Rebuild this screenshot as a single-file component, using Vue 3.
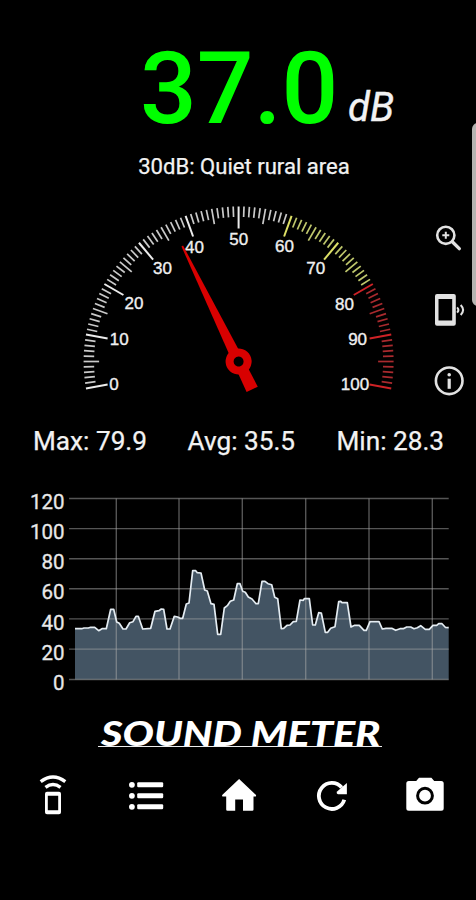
<script setup>
const CX = 238.6
const CY = 361.5
const R = 155

const ticks = Array.from({ length: 101 }, (_, v) => {
  const a = ((v * 2 - 10) * Math.PI) / 180
  const len = v % 10 === 0 ? 22 : v % 5 === 0 ? 15.5 : 10.5
  return {
    v,
    x1: CX - R * Math.cos(a),
    y1: CY - R * Math.sin(a),
    x2: CX - (R - len) * Math.cos(a),
    y2: CY - (R - len) * Math.sin(a),
    kind: v >= 80 ? 'loud' : v >= 60 ? 'medium' : 'calm',
    major: v % 10 === 0
  }
})

const dialLabels = [
  { t: 0, x: 114, y: 389.8 },
  { t: 10, x: 119.2, y: 345.4 },
  { t: 20, x: 134, y: 308.8 },
  { t: 30, x: 162.4, y: 274.2 },
  { t: 40, x: 194.4, y: 252.6 },
  { t: 50, x: 238.8, y: 244.8 },
  { t: 60, x: 284.4, y: 252.2 },
  { t: 70, x: 315.8, y: 274 },
  { t: 80, x: 344.4, y: 309.8 },
  { t: 90, x: 357.6, y: 345.4 },
  { t: 100, x: 355, y: 389.8 }
]

const level = 37
const needleTurn = `translate(${CX} ${CY}) rotate(${(level - 50) * 2})`

const rows = [
  { t: 120, y: 498.5 },
  { t: 100, y: 528.6 },
  { t: 80, y: 558.7 },
  { t: 60, y: 588.8 },
  { t: 40, y: 618.9 },
  { t: 20, y: 649.1 },
  { t: 0, y: 679.5 }
]
const cols = [116.3, 179, 242.3, 305.7, 369, 432.3]

// Samples in thirds of a pixel, measured from the chart's upper left corner.
const samples = [
  [165, 431], [185, 431], [192, 429], [205, 429], [212, 427], [224, 427], [236, 437], [246, 431],
  [259, 431], [272, 373], [281, 373], [290, 411], [298, 415], [309, 432], [318, 432], [329, 413],
  [339, 410], [348, 394], [355, 394], [368, 432], [392, 430], [405, 379], [417, 377], [424, 372],
  [431, 373], [441, 432], [450, 432], [463, 394], [473, 396], [480, 400], [488, 400], [499, 357],
  [507, 354], [518, 257], [527, 257], [532, 263], [543, 264], [554, 315], [562, 318], [573, 356],
  [582, 358], [593, 448], [602, 448], [613, 369], [622, 362], [631, 349], [641, 345], [652, 296],
  [660, 296], [668, 319], [676, 322], [685, 336], [696, 342], [708, 356], [715, 356], [726, 289],
  [735, 289], [744, 296], [755, 299], [764, 337], [773, 341], [784, 431], [791, 430], [801, 421],
  [810, 420], [820, 410], [829, 409], [840, 345], [850, 346], [853, 341], [868, 341], [878, 420],
  [886, 420], [896, 383], [904, 384], [916, 442], [923, 442], [932, 430], [945, 425], [956, 350],
  [962, 349], [966, 353], [982, 353], [993, 426], [1004, 421], [1018, 421], [1032, 436], [1039, 436],
  [1050, 410], [1077, 410], [1087, 432], [1098, 430], [1115, 430], [1127, 436], [1140, 431],
  [1150, 431], [1160, 426], [1172, 426], [1182, 431], [1192, 428], [1202, 422], [1216, 433],
  [1228, 433], [1239, 421], [1250, 421], [1256, 416], [1266, 416], [1276, 427], [1286, 428]
]
const line = samples
  .map(([x, y]) => `${(20 + x / 3).toFixed(1)},${(485 + y / 3).toFixed(1)}`)
  .join(' ')
const area = `75,679.5 ${line} 448.7,679.5`
</script>

<template>
  <main class="screen">
    <header class="reading">
      <span class="value">37.0</span>
      <span class="unit">dB</span>
    </header>
    <p class="hint">30dB: Quiet rural area</p>

    <section class="meter">
      <svg class="dial" viewBox="0 195 416 210">
        <line
          v-for="k in ticks"
          :key="k.v"
          :x1="k.x1"
          :y1="k.y1"
          :x2="k.x2"
          :y2="k.y2"
          :class="['tick', k.kind, { major: k.major }]"
        />
        <text v-for="l in dialLabels" :key="l.t" :x="l.x" :y="l.y" class="dial-label">{{ l.t }}</text>
        <g :transform="needleTurn" class="needle">
          <path d="M-.9 -128.5H.9L5.2 -11H-5.2Z" />
          <path d="M-5.6 10H5.6L6.2 31H-6.2Z" />
          <circle r="9" class="hub" />
        </g>
      </svg>
      <nav class="side">
        <svg class="side-icon" viewBox="430.5 220 36 36">
          <circle cx="445.3" cy="235.3" r="8.6" class="stroke" />
          <path d="M451.8 241.8L458.8 248.6" class="stroke handle" />
          <path d="M445.3 231.8V238.8M441.8 235.3H448.8" class="stroke thin" />
        </svg>
        <svg class="side-icon" viewBox="430.5 292 36 36">
          <path
            d="M436.5 294H453.3Q455.3 294 455.3 296V323.7Q455.3 325.7 453.3 325.7H436.5Q434.5 325.7 434.5 323.7V296Q434.5 294 436.5 294ZM438 299V320.5H451.7V299Z"
            fill-rule="evenodd"
            class="solid"
          />
          <path d="M456.6 307.4Q459.2 310 456.6 312.6" class="stroke thin" />
          <path d="M460.2 305Q465 310 460.2 315" class="stroke thin" />
        </svg>
        <svg class="side-icon" viewBox="430.5 363 36 36">
          <circle cx="448.7" cy="380.8" r="13.3" class="stroke" />
          <circle cx="448.7" cy="374.7" r="1.8" class="solid" />
          <path d="M448.7 378.7V388.8" class="stroke stem" />
        </svg>
      </nav>
    </section>

    <section class="stats">
      <span>Max: 79.9</span>
      <span>Avg: 35.5</span>
      <span>Min: 28.3</span>
    </section>

    <svg class="chart" viewBox="0 485 476 215">
      <polygon :points="area" class="area" />
      <path v-for="r in rows" :key="r.t" :d="`M69 ${r.y}H448.7`" class="grid" />
      <path v-for="c in cols" :key="c" :d="`M${c} 498.5V679.5`" class="grid" />
      <polyline :points="line" class="trace" />
      <text v-for="r in rows" :key="'t' + r.t" x="64.6" :y="r.y + 10.6" class="axis">{{ r.t }}</text>
    </svg>

    <div class="brand"><h1><span>SOUND METER</span></h1></div>

    <nav class="tabs">
      <svg class="tab" viewBox="32.7 774 40 42">
        <path
          d="M46.7 791.7H58.7Q60.7 791.7 60.7 793.7V812.3Q60.7 814.3 58.7 814.3H46.7Q44.7 814.3 44.7 812.3V793.7Q44.7 791.7 46.7 791.7ZM47.5 795.7V810.3H57.9V795.7Z"
          fill-rule="evenodd"
        />
        <path d="M40.4 781.6Q52.7 772.4 65 781.6" class="wave" />
        <path d="M45.2 787.4Q52.7 781.6 60.2 787.4" class="wave" />
      </svg>
      <svg class="tab" viewBox="125.4 774 40 42">
        <g v-for="y in [784.8, 795.8, 806.8]" :key="y">
          <circle cx="131.3" :cy="y" r="2.9" />
          <rect x="136.6" :y="y - 2.5" width="26" height="5" rx="1.2" />
        </g>
      </svg>
      <svg class="tab" viewBox="218.8 774 40 42">
        <path
          d="M238.9 779L255.8 795Q256.2 796.6 254.8 796.6H253.3V809.5Q253.3 810.7 252.1 810.7H242.8V799.6H235V810.7H227.2Q226 810.7 226 809.5V796.6H223Q221.6 796.6 222 795Z"
        />
      </svg>
      <svg class="tab" viewBox="311.9 774 40 42">
        <path d="M341.6 787.4A13 13 0 1 0 344.2 799.8" class="ring" />
        <path d="M346.8 783V794.2H338Q335.8 793.6 337 791.6Z" />
      </svg>
      <svg class="tab" viewBox="405 774 40 42">
        <path
          d="M419 777.7H431.4L434.2 781H441.2Q443.7 781 443.7 783.5V808.2Q443.7 810.7 441.2 810.7H408.8Q406.3 810.7 406.3 808.2V783.5Q406.3 781 408.8 781H416.2Z"
        />
        <circle cx="425" cy="795.7" r="7.4" class="lens" />
      </svg>
    </nav>

    <i class="edge-handle"></i>
  </main>
</template>

<style>
body {
  background: #000;
}
</style>

<style scoped>
.screen {
  position: relative;
  width: 476px;
  height: 900px;
  overflow: hidden;
  background: #000;
  color: #f2f2f2;
  font-family: Roboto, "Liberation Sans", sans-serif;
}
.reading {
  display: flex;
  align-items: flex-start;
  height: 150px;
  padding-left: 140px;
  box-sizing: border-box;
  white-space: nowrap;
}
.value {
  width: 208px;
  padding-top: 30px;
  font-size: 100px;
  line-height: 117px;
  font-weight: 500;
  color: #0f0;
}
.unit {
  padding-top: 84px;
  font-size: 40px;
  line-height: 47px;
  font-style: italic;
  -webkit-text-stroke: 0.4px #f2f2f2;
}
.hint {
  height: 45px;
  margin: 0;
  padding-left: 12px;
  text-align: center;
  font-size: 22.1px;
  line-height: 32px;
  -webkit-text-stroke: 0.25px #f2f2f2;
}
.meter {
  display: flex;
  height: 210px;
}
.dial {
  width: 416px;
  height: 210px;
}
.tick {
  stroke-width: 1.7;
}
.tick.major {
  stroke-width: 2;
}
.calm {
  stroke: #c9c9c9;
}
.medium {
  stroke: #bfc76c;
}
.loud {
  stroke: #a92a2e;
}
.calm.major {
  stroke: #ececec;
}
.medium.major {
  stroke: #dde066;
}
.loud.major {
  stroke: #cf2226;
}
.dial-label {
  font: 17px "Liberation Sans", sans-serif;
  fill: #f0f0f0;
  stroke: #f0f0f0;
  stroke-width: 0.35;
  text-anchor: middle;
}
.needle {
  fill: #d80000;
}
.hub {
  fill: #000;
  stroke: #d80000;
  stroke-width: 8;
}
.side {
  display: flex;
  flex-direction: column;
  gap: 36px;
  padding: 25px 0 0 14.5px;
}
.side-icon {
  width: 36px;
  height: 36px;
}
.side-icon:last-child {
  margin-top: -1px;
}
.stroke {
  fill: none;
  stroke: #e2e2e2;
  stroke-width: 2.6;
}
.handle {
  stroke-width: 3.4;
  stroke-linecap: round;
}
.thin {
  stroke-width: 2;
}
.stem {
  stroke-width: 3.2;
}
.solid {
  fill: #e2e2e2;
}
.stats {
  display: grid;
  grid-template-columns: 154.5px 149px 1fr;
  height: 80px;
  padding: 21px 0 0 33px;
  box-sizing: border-box;
  font-size: 26.2px;
  line-height: 30px;
  white-space: nowrap;
  -webkit-text-stroke: 0.25px #f2f2f2;
}
.chart {
  display: block;
  width: 476px;
  height: 215px;
}
.area {
  fill: #435463;
}
.grid {
  fill: none;
  stroke: #aaa;
  stroke-opacity: 0.5;
  stroke-width: 1.4;
}
.trace {
  fill: none;
  stroke: #e4ecf2;
  stroke-width: 1.7;
  stroke-linejoin: round;
}
.axis {
  font-size: 20.5px;
  fill: #e8e8e8;
  stroke: #e8e8e8;
  stroke-width: 0.3;
  text-anchor: end;
}
.brand {
  height: 74px;
  padding: 15px 0 0 98px;
  box-sizing: border-box;
}
h1 {
  width: 284px;
  height: 32px;
  margin: 0;
  padding-left: 3px;
  box-sizing: border-box;
  border-bottom: 1.6px solid #eee;
  font: italic 900 35px/35px Lato, sans-serif;
  white-space: nowrap;
  color: #fff;
}
h1 span {
  display: inline-block;
  transform: scaleX(1.185);
  transform-origin: left;
}
.tabs {
  display: grid;
  grid-template-columns: repeat(5, 93.1px);
  justify-items: center;
  padding-left: 6px;
}
.tab {
  width: 40px;
  height: 42px;
  fill: #fff;
}
.wave {
  fill: none;
  stroke: #fff;
  stroke-width: 3.4;
}
.ring {
  fill: none;
  stroke: #fff;
  stroke-width: 3.8;
}
.lens {
  stroke: #000;
  stroke-width: 3;
}
.edge-handle {
  position: absolute;
  top: 123px;
  right: -8px;
  width: 12.5px;
  height: 183px;
  border-radius: 7px;
  background: #b5b3b1;
}
</style>
